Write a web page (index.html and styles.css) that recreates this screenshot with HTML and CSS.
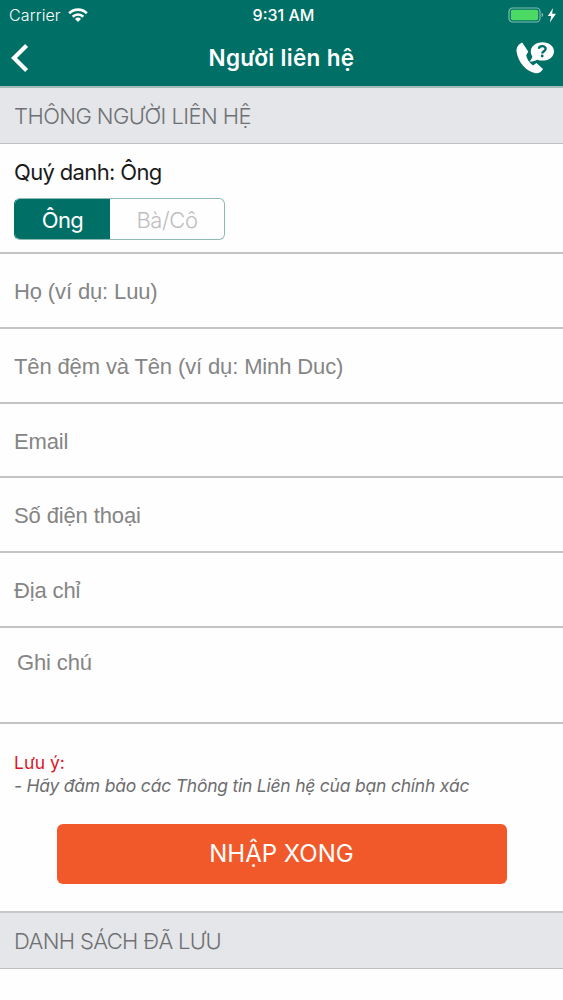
FILE: index.html
```html
<!DOCTYPE html>
<html lang="vi">
<head>
  <meta charset="UTF-8">
  <meta name="viewport" content="width=device-width, initial-scale=1.0">
  <title>Người liên hệ</title>
  <link rel="stylesheet" href="styles.css">
</head>
<body>
  <header>
    <div class="status-bar">
      <div class="status-left">
        <span class="carrier">Carrier</span>
        <svg class="wifi" viewBox="0 0 20 14" width="20" height="14">
          <g fill="none" stroke="#fff" stroke-width="2.6">
            <path d="M1.2 5.2a12.6 12.6 0 0 1 17.6 0"/>
            <path d="M4.7 8.7a7.6 7.6 0 0 1 10.6 0"/>
          </g>
          <path fill="#fff" d="M7 11a4.4 4.4 0 0 1 6 0l-3 3z"/>
        </svg>
      </div>
      <span class="time">9:31 AM</span>
      <div class="status-right">
        <svg viewBox="0 0 50 18" width="50" height="18">
          <rect x="1" y="2" width="31" height="14" rx="3.6" fill="none" stroke="#7fbdb3" stroke-width="1.2"/>
          <rect x="2.8" y="3.8" width="27.4" height="10.4" rx="1.8" fill="#4cd964"/>
          <path d="M33.6 6.8q1.6.6 1.6 2.2t-1.6 2.2z" fill="#7fbdb3"/>
          <path d="M45 2L39.8 10h3.4l-1.4 6.6L48 7.8h-3.9z" fill="#fff"/>
        </svg>
      </div>
    </div>
    <nav>
      <a href="#" class="back">
        <svg viewBox="0 0 18 30" width="18" height="30">
          <path d="M15.6 2.4L3 15l12.6 12.6" fill="none" stroke="#fff" stroke-width="4.2"/>
        </svg>
      </a>
      <h1>Người liên hệ</h1>
      <a href="#" class="support">
        <svg viewBox="0 0 40 34" width="40" height="34">
          <path d="M7.2 1.4C3.4 3 1 6.5 1.6 11 3.2 21.4 11.6 31 20.6 32.2c3 .3 5.8-1.2 7.4-4.2L21.4 22l-3.4 2.4C14.4 21.8 12 18.2 11.2 14.4l2-3.8z" fill="#fff"/>
          <path d="M27.5 1.3c6.6 0 11.5 4 11.5 9.1s-4.9 9.2-11.5 9.2c-2 0-3.7-.3-5.3-.9-2.3 1.4-5 1.9-7.8 1.7 1.5-1.3 2.6-3 2.9-5-1-1.500-1.500-3.200-1.500-5 0-5.100 5.100-9.100 11.700-9.100z" fill="#fff"/>
          <path d="M23.9 7.8c.2-3.6 6.9-3.5 6.7.2-.1 2.2-3.300 2.200-3.300 4.500" fill="none" stroke="#007066" stroke-width="2.4"/>
          <circle cx="27.2" cy="15" r="1.4" fill="#007066"/>
        </svg>
      </a>
    </nav>
  </header>

  <h2 class="section-title">THÔNG NGƯỜI LIÊN HỆ</h2>

  <form>
    <div class="salutation">
      <p>Quý danh: Ông</p>
      <div class="segmented">
        <button type="button" class="active">Ông</button>
        <button type="button">Bà/Cô</button>
      </div>
    </div>
    <input type="text" placeholder="Họ (ví dụ: Luu)">
    <input type="text" placeholder="Tên đệm và Tên (ví dụ: Minh Duc)">
    <input type="email" placeholder="Email">
    <input type="tel" placeholder="Số điện thoại">
    <input type="text" placeholder="Địa chỉ">
    <textarea placeholder="Ghi chú"></textarea>

    <div class="note">
      <p class="note-title">Lưu ý:</p>
      <p class="note-text">- Hãy đảm bảo các Thông tin Liên hệ của bạn chính xác</p>
    </div>
    <button type="button" class="submit">NHẬP XONG</button>
  </form>

  <h2 class="section-title saved">DANH SÁCH ĐÃ LƯU</h2>
</body>
</html>
```
FILE: styles.css
```css
* {
  margin: 0;
  padding: 0;
  box-sizing: border-box;
}
body {
  font-family: Inter, sans-serif;
  background: #fefefe;
  color: #1a1a1a;
  overflow: hidden;
}
button {
  font-family: inherit;
  border: none;
}
svg {
  display: block;
}
header {
  height: 88px;
  background: #007066;
  border-bottom: 2px solid #a3bdb9;
  color: white;
}
.status-bar {
  height: 29px;
  display: grid;
  grid-template-columns: 1fr auto 1fr;
  align-items: center;
  padding: 0 5px 0 9px;
  font-size: 16px;
}
.status-left {
  display: flex;
  align-items: center;
  gap: 7px;
}
.carrier {
  font-weight: 300;
  letter-spacing: 0.1px;
}
.time {
  font-weight: 500;
}
.status-right {
  display: flex;
  justify-content: flex-end;
}
nav {
  height: 57px;
  display: grid;
  grid-template-columns: 1fr auto 1fr;
  align-items: center;
  padding: 0 8px;
}
.back {
  padding-left: 3px;
}
h1 {
  font-size: 22.5px;
  font-weight: 600;
  letter-spacing: 0.35px;
  line-height: 28px;
}
.support {
  justify-self: end;
}
.section-title {
  height: 56px;
  line-height: 57px;
  padding-left: 14px;
  background: #e4e6e9;
  border-bottom: 1px solid #bfc0c2;
  color: #6f7073;
  font-size: 22px;
  font-weight: 300;
  letter-spacing: -0.57px;
}
.salutation {
  height: 110.4px;
  padding: 15px 14px 0;
  border-bottom: 2px solid #c4c4c4;
}
.salutation p {
  font-size: 22px;
  line-height: 27px;
  letter-spacing: -0.65px;
}
.segmented {
  display: flex;
  width: 211px;
  height: 42px;
  margin-top: 12px;
  border: 1px solid #8dbab3;
  border-left-color: #007066;
  border-radius: 6px;
  overflow: hidden;
}
.segmented button {
  flex: 1;
  padding-top: 2px;
  background: transparent;
  color: #bdbdc0;
  font-size: 22px;
  font-weight: 300;
  letter-spacing: -0.4px;
}
.segmented .active {
  flex: 0 0 95px;
  background: #007066;
  color: white;
  font-weight: 400;
  letter-spacing: -0.6px;
}
input,
textarea {
  display: block;
  width: 100%;
  height: 74.7px;
  padding: 3px 14px 0;
  border: none;
  border-bottom: 2px solid #c4c4c4;
  background: transparent;
  font-family: "Liberation Sans", sans-serif;
  font-size: 22px;
  letter-spacing: -0.13px;
  outline: none;
  resize: none;
}
input::placeholder,
textarea::placeholder {
  color: #858585;
  opacity: 1;
}
textarea {
  height: 96px;
  padding: 22px 17px 0;
}
.note {
  padding: 27px 14px 0;
}
.note p {
  font-size: 17.5px;
  line-height: 23px;
}
.note-title {
  color: #dc1426;
}
.note-text {
  color: #6d6d6f;
  font-style: italic;
  letter-spacing: -0.23px;
}
.submit {
  display: block;
  width: 450px;
  height: 60px;
  margin: 27px 0 27px 56.5px;
  border-radius: 6px;
  background: #f2592a;
  color: white;
  font-size: 24px;
}
.saved {
  height: 58px;
  border-top: 2px solid #c6c7c9;
  letter-spacing: -0.65px;
}
```
